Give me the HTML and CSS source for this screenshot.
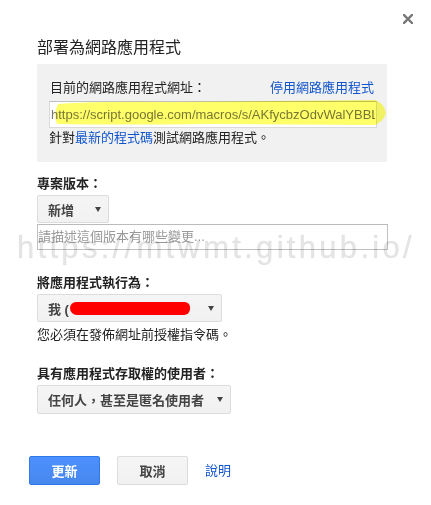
FILE: index.html
```html
<!DOCTYPE html>
<html lang="zh-Hant">
<head>
<meta charset="utf-8">
<title>部署為網路應用程式</title>
<link rel="stylesheet" href="styles.css">
</head>
<body>
<div class="dialog">
  <button class="close" aria-label="關閉">
    <svg width="10" height="10" viewBox="0 0 10 10"><path d="M1 1 L9 9 M9 1 L1 9" stroke="#777" stroke-width="2.4" stroke-linecap="square"/></svg>
  </button>
  <h1 class="title">部署為網路應用程式</h1>
  <div class="panel">
    <div class="panel-head">
      <span>目前的網路應用程式網址：</span>
      <a class="link disable">停用網路應用程式</a>
    </div>
    <div class="url-wrap">
      <input class="url" readonly value="https://script.google.com/macros/s/AKfycbzOdvWalYBBLxq3">
      <svg class="marker" width="334" height="28" viewBox="0 0 334 28"><path d="M5 5 Q40 2 120 3 L322 1 Q331 4 333 14 Q331 22 322 26 L160 25 Q60 26 4 25 Q0 15 5 5 Z" fill="#ffff6a"/></svg>
    </div>
    <p class="hint">針對<a class="link">最新的程式碼</a>測試網路應用程式。</p>
  </div>

  <div class="label first">專案版本：</div>
  <div class="select w-version"><span>新增</span><span class="arrow"></span></div>
  <textarea class="desc" placeholder="請描述這個版本有哪些變更..."></textarea>

  <div class="label run">將應用程式執行為：</div>
  <div class="select w-run"><span class="me">我 (<span class="redact"></span></span><span class="arrow"></span></div>
  <p class="note">您必須在發佈網址前授權指令碼。</p>

  <div class="label access">具有應用程式存取權的使用者：</div>
  <div class="select w-access"><span>任何人，甚至是匿名使用者</span><span class="arrow"></span></div>

  <div class="actions">
    <button class="btn primary">更新</button>
    <button class="btn">取消</button>
    <a class="link help">說明</a>
  </div>

  <div class="watermark">https://mtwmt.github.io/</div>
</div>
</body>
</html>
```

FILE: styles.css
```css
* { box-sizing: border-box; }
html, body { margin: 0; padding: 0; background: #fff; }
body {
  font-family: Arial, "Liberation Sans", "Noto Sans CJK TC", sans-serif;
  font-size: 13px;
  color: #222;
  width: 431px;
  height: 505px;
  overflow: hidden;
}
.dialog {
  position: relative;
  padding: 38px 0 0 37px;
  height: 505px;
}
.close {
  position: absolute;
  top: 14px;
  left: 403px;
  width: 10px;
  height: 10px;
  padding: 0;
  border: 0;
  background: none;
  display: block;
}
.close svg { display: block; }
.title {
  margin: 0 0 6px;
  font-size: 16px;
  line-height: 20px;
  font-weight: normal;
  color: #222;
}
.panel {
  width: 350px;
  background: #f1f1f1;
  padding: 16px 10px 16px 12px;
}
.panel-head {
  display: flex;
  justify-content: space-between;
  line-height: 16px;
  padding-left: 1px;
  padding-right: 3px;
}
.link { color: #15c; text-decoration: none; cursor: pointer; }
.url-wrap {
  position: relative;
  margin-top: 5px;
  height: 27px;
}
.url {
  display: block;
  width: 328px;
  height: 27px;
  border: 1px solid #d9d9d9;
  border-top-color: #c0c0c0;
  background: #fff;
  padding: 0 1px;
  font-family: Arial, "Liberation Sans", sans-serif;
  font-size: 13px;
  color: #777;
  outline: none;
}
.marker {
  position: absolute;
  left: 4px;
  top: -2px;
  mix-blend-mode: multiply;
  pointer-events: none;
}
.hint {
  margin: 2px 0 0;
  line-height: 16px;
}
.label {
  font-weight: bold;
  line-height: 16px;
  color: #222;
}
.label.first { margin-top: 14px; }
.label.run { margin-top: 25px; }
.label.access { margin-top: 23px; }
.select {
  display: flex;
  align-items: center;
  justify-content: space-between;
  height: 28px;
  margin-top: 3px;
  padding: 0 7px 0 10px;
  border: 1px solid #dcdcdc;
  border-radius: 2px;
  background: linear-gradient(#f5f5f5, #f1f1f1);
  font-weight: bold;
  color: #444;
}
.w-version { width: 72px; }
.w-run { width: 185px; }
.w-access { width: 194px; height: 29px; }
.arrow {
  width: 0;
  height: 0;
  border-left: 3px solid transparent;
  border-right: 3px solid transparent;
  border-top: 5px solid #444;
}
.me { display: flex; align-items: center; }
.redact {
  display: inline-block;
  width: 120px;
  height: 13px;
  margin-left: 1px;
  background: #ff0000;
  border-radius: 7px 6px 7px 8px;
}
.desc {
  display: block;
  width: 351px;
  height: 26px;
  margin: 1px 0 0;
  border: 1px solid #c0c0c0;
  border-top-color: #bbb;
  padding: 4px 0 0 0;
  resize: none;
  font-family: Arial, "Liberation Sans", "Noto Sans CJK TC", sans-serif;
  font-size: 13px;
  line-height: 16px;
  color: #222;
  background: #fff;
  outline: none;
  overflow: hidden;
}
.desc::placeholder { color: #999; }
.note {
  margin: 5px 0 0;
  line-height: 16px;
}
.actions {
  display: flex;
  align-items: center;
  margin-top: 42px;
  margin-left: -8px;
  gap: 17px;
}
.btn {
  width: 71px;
  height: 29px;
  padding: 0;
  border: 1px solid #dcdcdc;
  border-radius: 2px;
  background: linear-gradient(#f5f5f5, #f1f1f1);
  font-family: Arial, "Liberation Sans", "Noto Sans CJK TC", sans-serif;
  font-size: 13px;
  font-weight: bold;
  color: #444;
}
.btn.primary {
  background: linear-gradient(#4d90fe, #4787ed);
  border-color: #3079ed;
  color: #fff;
}
.help { margin-left: 0; line-height: 16px; }
.watermark {
  position: absolute;
  left: 17px;
  top: 228px;
  font-family: "Liberation Sans", Arial, sans-serif;
  font-size: 31px;
  line-height: 39px;
  letter-spacing: 3.3px;
  color: rgba(0, 0, 0, 0.1);
  white-space: nowrap;
  pointer-events: none;
  -webkit-text-stroke: 0.6px rgba(0, 0, 0, 0.06);
}
```
